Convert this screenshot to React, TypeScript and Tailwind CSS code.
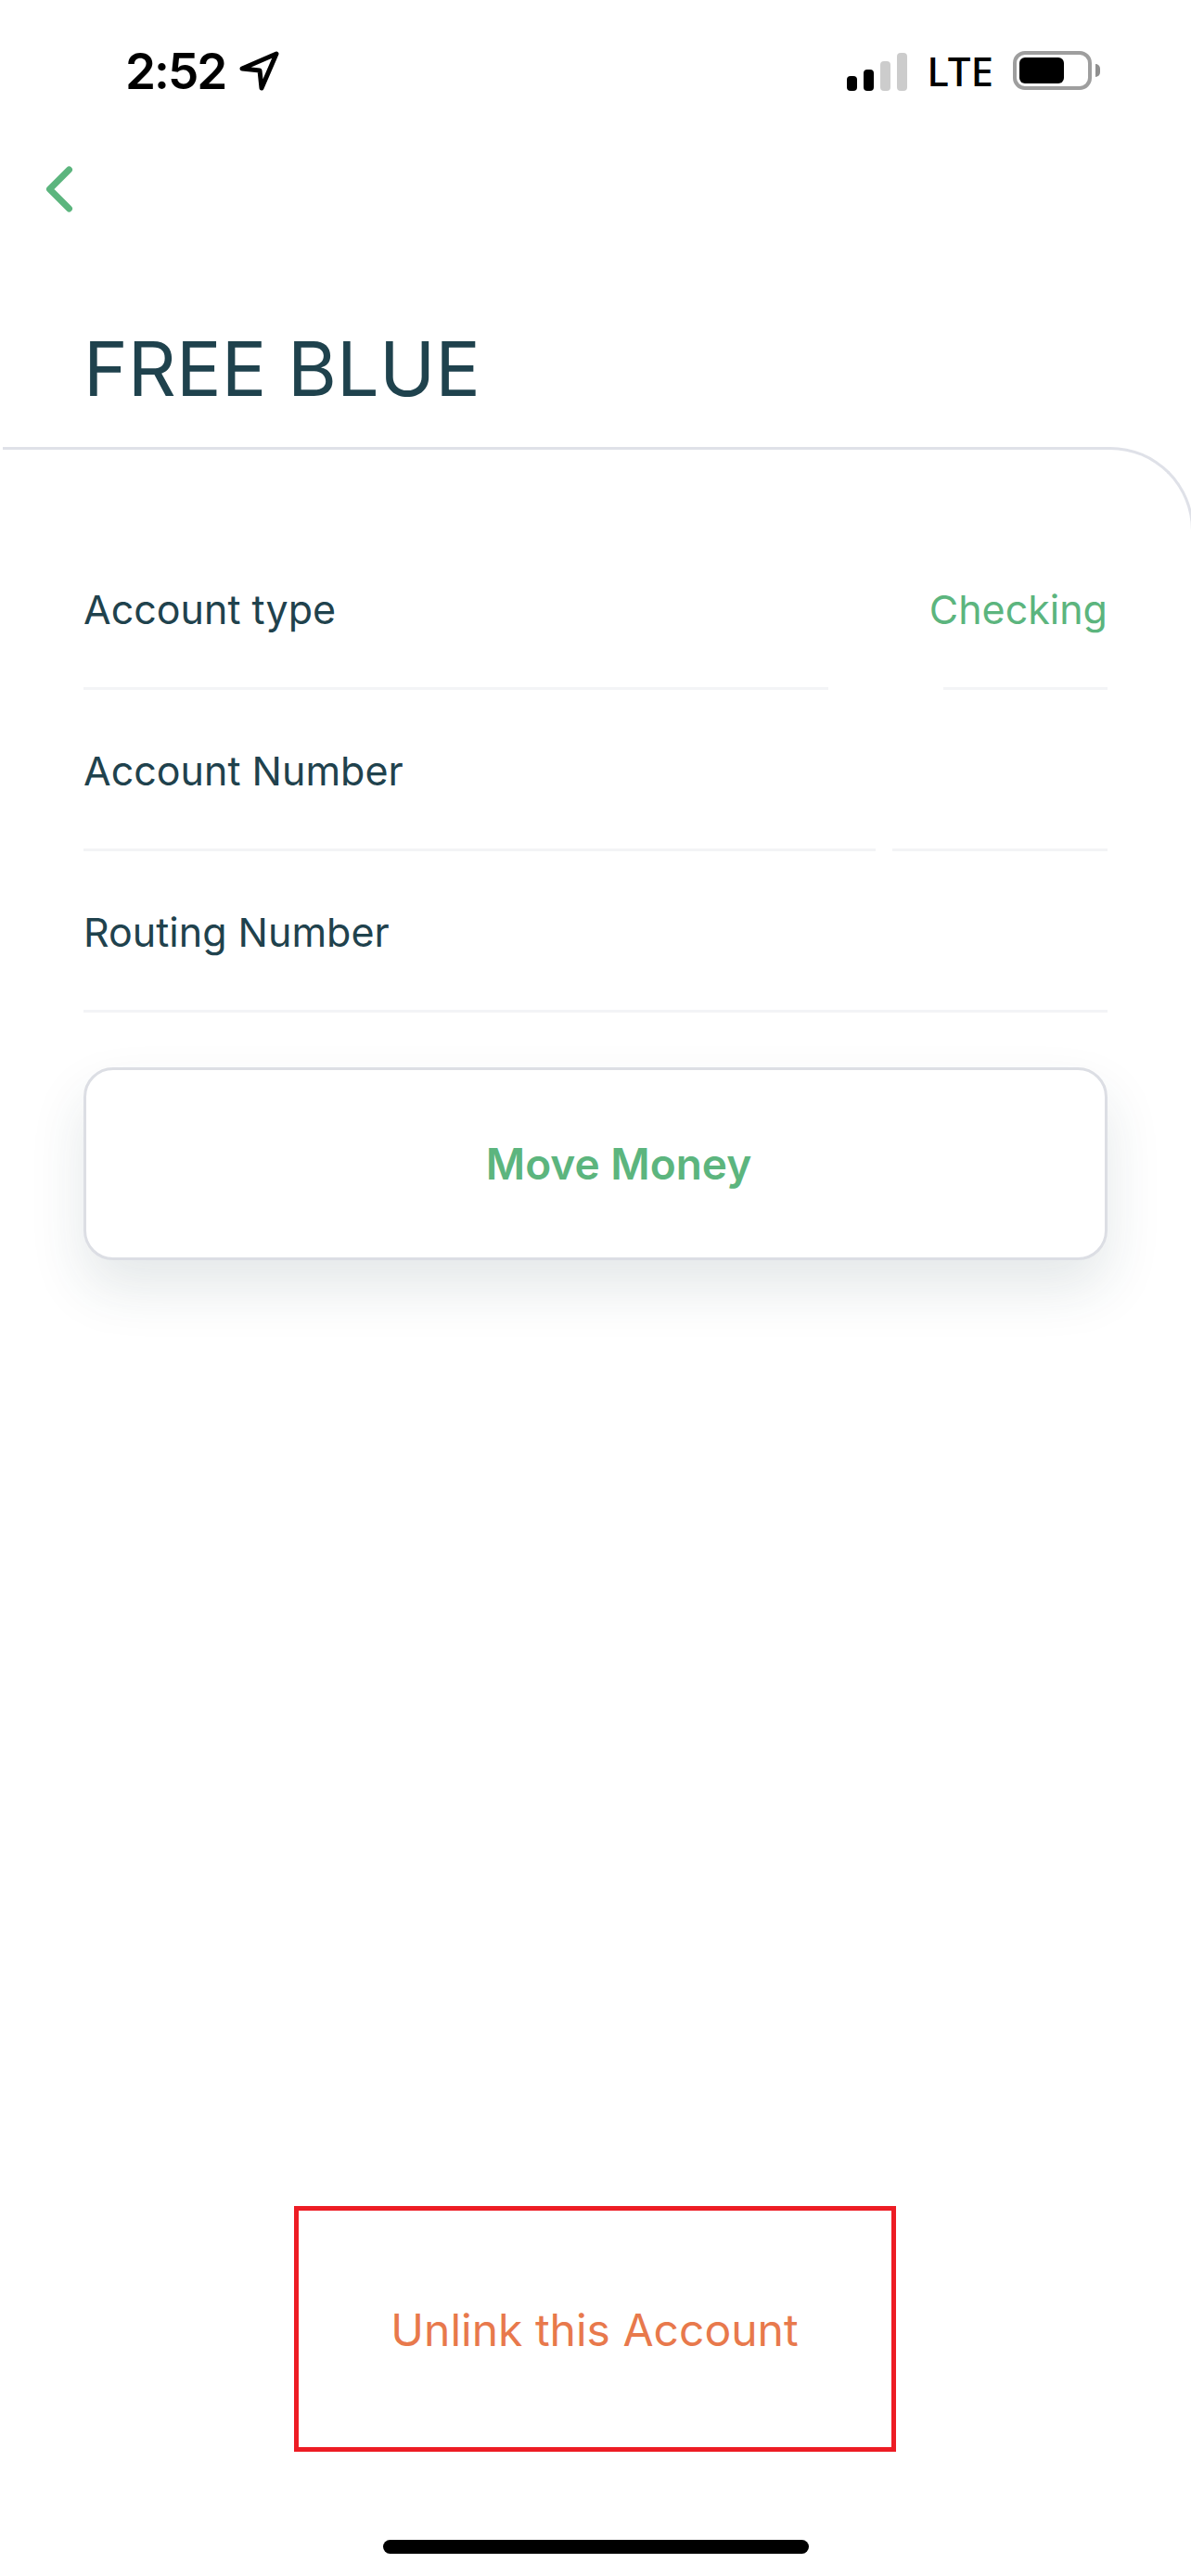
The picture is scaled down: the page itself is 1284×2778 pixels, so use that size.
import { ChevronLeft } from "lucide-react";

const rows = [
  { label: "Account type", value: "Checking", gapLeft: 803, gapWidth: 124 },
  { label: "Account Number", value: "", gapLeft: 854, gapWidth: 18 },
  { label: "Routing Number", value: "", gapLeft: 0, gapWidth: 0 },
];

const StatusBar = () => {
  return (
    <div className="flex h-[100px] items-start justify-between pt-[54px] pr-[98px] pl-[135px]">
      <div className="flex items-center gap-[15px]">
        <span className="font-['Inter'] text-[53px] leading-[46px] font-semibold tracking-[-2px] text-black">
          2:52
        </span>
        <svg width="44" height="44" viewBox="0 0 44 44" fill="none">
          <path
            d="M3 19 L40 3 L24 40 L22 21 Z"
            stroke="#000"
            strokeWidth="5"
            strokeLinejoin="round"
          />
        </svg>
      </div>
      <div className="flex items-end gap-[21px]">
        <div className="flex h-[41px] items-end gap-[7px]">
          <div className="h-[16px] w-[11px] rounded-[4px] bg-black" />
          <div className="h-[23px] w-[11px] rounded-[4px] bg-black" />
          <div className="h-[32px] w-[11px] rounded-[4px] bg-[#cccccc]" />
          <div className="h-[41px] w-[11px] rounded-[4px] bg-[#cccccc]" />
        </div>
        <div className="flex items-center gap-[21px]">
          <span className="font-['Noto_Sans'] text-[44px] leading-[44px] font-medium text-black">
            LTE
          </span>
          <div className="flex items-center gap-[4px]">
            <div className="h-[42px] w-[85px] rounded-[13px] border-[4px] border-[#9e9e9e] p-[3px]">
              <div className="h-full w-[48px] rounded-[6px] bg-black" />
            </div>
            <div className="h-[14px] w-[5px] rounded-r-full bg-[#8f8f8f]" />
          </div>
        </div>
      </div>
    </div>
  );
};

const InfoRow = ({
  label,
  value,
  gapLeft,
  gapWidth,
}: {
  label: string;
  value: string;
  gapLeft: number;
  gapWidth: number;
}) => {
  return (
    <div className="relative flex h-[174px] items-center justify-between border-b-[3px] border-[#f3f4f6] pt-1">
      <span className="text-[#1f424d]">{label}</span>
      <span className="text-[#5cb57e]">{value}</span>
      {gapWidth > 0 && (
        <div
          className="absolute -bottom-[3px] h-[3px] bg-white"
          style={{ left: gapLeft, width: gapWidth }}
        />
      )}
    </div>
  );
};

export default function App() {
  return (
    <div className="flex min-h-[2778px] flex-col overflow-hidden bg-white font-['Inter',sans-serif]">
      <StatusBar />
      <div className="mt-[62px] ml-[22px]">
        <ChevronLeft
          className="size-[84px] text-[#5cb57e]"
          strokeWidth={2}
        />
      </div>
      <h1 className="mt-[103px] ml-[90px] text-[81px] leading-[98px] font-normal text-[#1f424d]">
        FREE BLUE
      </h1>
      <div className="mt-[35px] ml-[3px] flex w-[1284px] flex-1 flex-col rounded-tr-[90px] border-t-[3px] border-r-[3px] border-[#dfe1e8] pt-[85px] pr-[90px] pl-[87px] text-[43px]">
        {rows.map((row) => (
          <InfoRow key={row.label} {...row} />
        ))}
        <div className="mt-[59px] flex h-[208px] items-center justify-center rounded-[32px] border-[3px] border-[#dcdee4] bg-white pl-[50px] text-[46px] font-semibold text-[#5cb57e] shadow-[0_30px_60px_rgba(31,66,77,0.12)]">
          Move Money
        </div>
        <div className="mt-auto flex flex-col items-center">
          <div className="flex h-[265px] w-[649px] -translate-x-[1px] items-center justify-center border-[5px] border-[#ed1c24] pt-[2px] text-[48px] text-[#e8794c]">
            Unlink this Account
          </div>
          <div className="mt-[95px] mb-[24px] h-[15px] w-[459px] rounded-full bg-black" />
        </div>
      </div>
    </div>
  );
}
